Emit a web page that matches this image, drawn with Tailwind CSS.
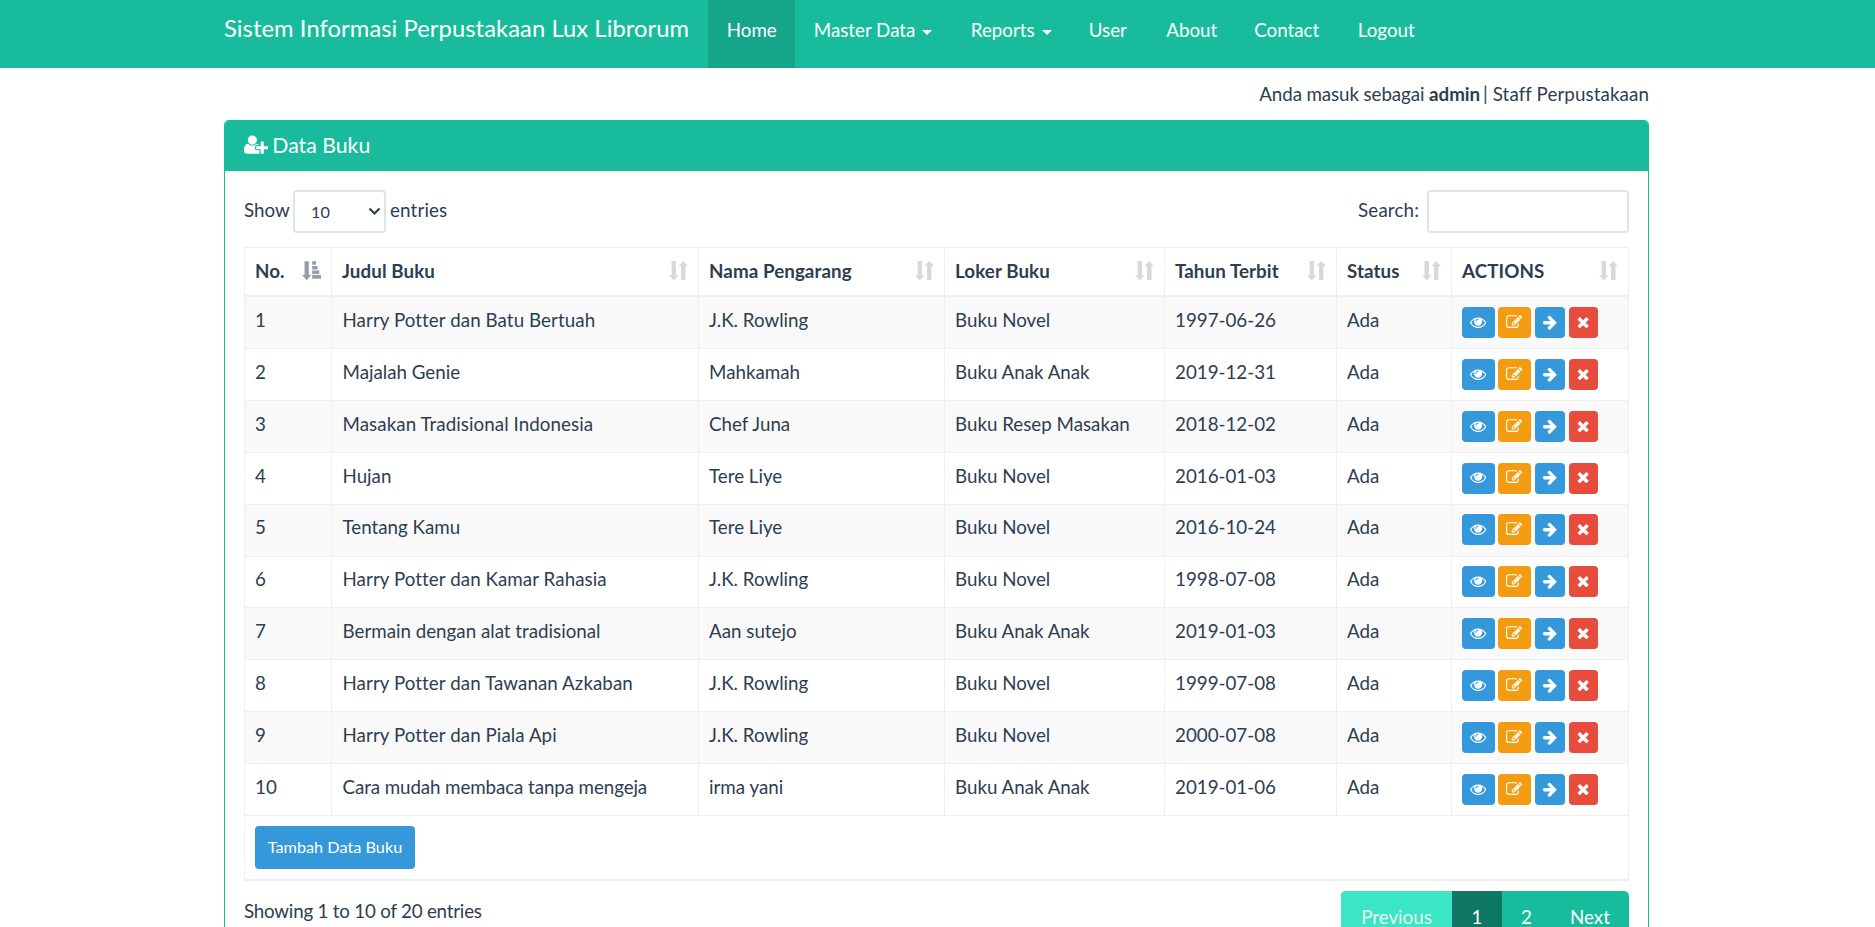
<!DOCTYPE html>
<html lang="id">
<head>
<meta charset="utf-8">
<title>Sistem Informasi Perpustakaan Lux Librorum</title>
<script src="https://cdn.jsdelivr.net/npm/@tailwindcss/browser@4"></script>
</head>
<body class="bg-white font-[Lato,sans-serif] text-[18.75px] leading-[26.8px] text-[#2c3e50] h-[927px] overflow-hidden">
<svg class="hidden">
  <symbol id="eye" viewBox="0 0 1792 1792"><path d="M1664 960q-152-236-381-353 61 104 61 225 0 185-131.5 316.5t-316.5 131.5-316.5-131.5-131.5-316.5q0-121 61-225-229 117-381 353 133 205 333.5 326.5t434.5 121.5 434.5-121.5 333.5-326.5zm-720-384q0-20-14-34t-34-14q-125 0-214.5 89.5t-89.5 214.5q0 20 14 34t34 14 34-14 14-34q0-86 61-147t147-61q20 0 34-14t14-34zm848 384q0 34-20 69-140 230-376.5 368.5t-499.5 138.5-499.5-139-376.5-368q-20-35-20-69t20-69q140-229 376.5-368t499.5-139 499.5 139 376.5 368q20 35 20 69z"/></symbol>
  <symbol id="edit" viewBox="0 0 1792 1792"><path d="M888 1184l116-116-152-152-116 116v56h96v96h56zm440-720q-16-16-33 1l-350 350q-17 17-1 33t33-1l350-350q17-17 1-33zm80 594v190q0 119-84.5 203.5t-203.5 84.5h-832q-119 0-203.5-84.5t-84.5-203.5v-832q0-119 84.5-203.5t203.5-84.5h832q63 0 117 25 15 7 18 23 3 17-9 29l-49 49q-14 14-32 8-23-6-45-6h-832q-66 0-113 47t-47 113v832q0 66 47 113t113 47h832q66 0 113-47t47-113v-126q0-13 9-22l64-64q15-15 35-7t20 29zm-96-738l288 288-672 672h-288v-288zm444 132l-92 92-288-288 92-92q28-28 68-28t68 28l152 152q28 28 28 68t-28 68z"/></symbol>
  <symbol id="arrow" viewBox="0 0 1792 1792"><path d="M1600 960q0 54-37 91l-651 651q-39 37-91 37-51 0-90-37l-75-75q-38-38-38-91t38-91l293-293h-704q-52 0-84.5-37.5t-32.5-90.5v-128q0-53 32.5-90.5t84.5-37.5h704l-293-294q-38-36-38-90t38-90l75-75q38-38 90-38 53 0 91 38l651 651q37 35 37 90z"/></symbol>
  <symbol id="times" viewBox="0 0 1792 1792"><path d="M1490 1322q0 40-28 68l-136 136q-28 28-68 28t-68-28l-294-294-294 294q-28 28-68 28t-68-28l-136-136q-28-28-28-68t28-68l294-294-294-294q-28-28-28-68t28-68l136-136q28-28 68-28t68 28l294 294 294-294q28-28 68-28t68 28l136 136q28 28 28 68t-28 68l-294 294 294 294q28 28 28 68z"/></symbol>
  <symbol id="sort" viewBox="0 0 19 19.5"><path d="M2.6 0h4.3v14.2h2.6L4.8 19.5 0 14.2h2.6zM14.2 0L19 5.3h-2.6v14.2h-4.3V5.3H9.5z"/></symbol>
  <symbol id="sorted" viewBox="0 0 19.5 19.5"><path d="M2.6 0h4.4v14.2h2.6L4.8 19.5 0 14.2h2.6zM10.4 0h4v3.7h-4zM10.4 4.8h5.6v3.7h-5.6zM10.4 9.4h7.3v3.7h-7.3zM10.4 14.2h9.1v3.8h-9.1z"/></symbol>
</svg>

<nav class="h-[68px] bg-[#18bc9c] text-white">
  <div class="ml-[224px] flex h-full whitespace-nowrap">
    <a class="w-[484px] pt-[15px] text-[23.75px] tracking-[0.07px]">Sistem Informasi Perpustakaan Lux Librorum</a>
    <a class="w-[87px] bg-[#15a589] pt-[17px] pl-[18.75px]">Home</a>
    <a class="w-[157px] pt-[17px] pl-[18.75px] flex">Master Data<i class="ml-[7px] mt-[13px] size-0 border-x-[5px] border-t-[5px] border-x-transparent border-t-white"></i></a>
    <a class="w-[118px] pt-[17px] pl-[18.75px] flex">Reports<i class="ml-[7px] mt-[13px] size-0 border-x-[5px] border-t-[5px] border-x-transparent border-t-white"></i></a>
    <a class="w-[77.5px] pt-[17px] pl-[18.75px]">User</a>
    <a class="w-[88px] pt-[17px] pl-[18.75px]">About</a>
    <a class="w-[103.5px] pt-[17px] pl-[18.75px]">Contact</a>
    <a class="pt-[17px] pl-[18.75px]">Logout</a>
  </div>
</nav>

<main class="ml-[224px] w-[1425px]">
  <p class="h-[52px] pt-[13px] text-right"><span class="tracking-[-0.1px]">Anda masuk sebagai </span><b class="-mr-[2px]">admin</b> <span class="tracking-[0.1px]">| Staff Perpustakaan</span></p>
  <section class="h-[807px] overflow-hidden rounded-t-[5px] border border-b-0 border-[#18bc9c] bg-white">
    <h3 class="flex h-[50px] items-start bg-[#18bc9c] pl-[19px] pt-[12px] text-[21.25px] leading-[25px] text-white">
      <svg class="mt-[1px] mr-[4px] h-[21.25px] w-[24.3px] fill-white" viewBox="0 0 2048 1792"><path d="M704 896q-159 0-271.5-112.5t-112.5-271.5 112.5-271.5 271.5-112.5 271.5 112.5 112.5 271.5-112.5 271.5-271.5 112.5zm960 128h352q13 0 22.5 9.5t9.5 22.5v192q0 13-9.5 22.5t-22.5 9.5h-352v352q0 13-9.5 22.5t-22.5 9.5h-192q-13 0-22.5-9.5t-9.5-22.5v-352h-352q-13 0-22.5-9.5t-9.5-22.5v-192q0-13 9.5-22.5t22.5-9.5h352v-352q0-13 9.5-22.5t22.5-9.5h192q13 0 22.5 9.5t9.5 22.5v352zm-736 224q0 52 38 90t90 38h256v238q-68 50-171 50h-874q-121 0-194-69t-73-190q0-53 3.5-103.5t14-109 26.5-108.5 43-97.5 62-81 85.5-53.5 111.5-20q19 0 39 17 79 61 154.5 91.5t164.5 30.5 164.5-30.5 154.5-91.5q20-17 39-17 132 0 217 96h-223q-52 0-90 38t-38 90v192z"/></svg>
      Data Buku
    </h3>
    <div class="px-[19px] pt-[19px]">
      <div class="flex h-[57px] justify-between">
        <label class="flex">
          <span class="w-[49px] pt-[7px]">Show</span>
          <span class="relative h-[43px] w-[93px]">
            <select class="h-full w-full appearance-none rounded-[4px] border-2 border-[#dce4ec] bg-white pl-[16px] pt-[2px] text-[16.25px]"><option>10</option></select>
            <svg class="absolute right-[5px] top-[17px] h-[9px] w-[13px] fill-none stroke-[#2c3e50] stroke-[2.2]" viewBox="0 0 13 9"><path d="M1.5 1.5l5 5 5-5"/></svg>
          </span>
          <span class="pl-[4px] pt-[7px] tracking-[0.15px]">entries</span>
        </label>
        <label class="flex">
          <span class="pr-[8px] pt-[7px] tracking-[0.15px]">Search:</span>
          <input class="h-[43px] w-[202px] rounded-[4px] border-2 border-[#dce4ec]">
        </label>
      </div>
      <table class="w-[1385px] table-fixed border-separate border-spacing-0 border-r border-[#ecf0f1]">
        <colgroup><col class="w-[87px]"><col class="w-[367px]"><col class="w-[246px]"><col class="w-[220px]"><col class="w-[172px]"><col class="w-[115px]"><col class="w-[177px]"></colgroup>
        <thead><tr id="head"></tr></thead>
        <tbody id="rows"></tbody>
        <tfoot><tr><td colspan="7" class="h-[66px] border-l border-t border-b-2 border-[#ecf0f1] px-[10px] pt-[10px] align-top"><button class="h-[43px] w-[160px] rounded-[4px] bg-[#3498db] text-[16.25px] text-white">Tambah Data Buku</button></td></tr></tfoot>
      </table>
      <div class="flex justify-between pt-[10px]">
        <p class="pt-[7px] tracking-[-0.21px]">Showing 1 to 10 of 20 entries</p>
        <div class="flex h-[53px] overflow-hidden rounded-[5px] bg-[#18bc9c] text-center text-white">
          <a class="w-[111px] bg-[#3be6c4] pt-[13px] text-[#ecf0f1]">Previous</a>
          <a class="w-[50px] bg-[#0f7864] pt-[13px]">1</a>
          <a class="w-[49px] pt-[13px]">2</a>
          <a class="w-[78px] pt-[13px]">Next</a>
        </div>
      </div>
    </div>
  </section>
</main>

<script>
const heads = ["No.", "Judul Buku", "Nama Pengarang", "Loker Buku", "Tahun Terbit", "Status", "ACTIONS"];
document.getElementById("head").innerHTML = heads.map((h, i) =>
  `<th class="relative h-[50px] border-l border-t border-b-2 border-[#ecf0f1] px-[10px] pt-[10px] text-left align-top font-bold tracking-[0.08px]">${h}<svg class="absolute bottom-[15px] right-[10px] h-[19.5px] w-[19px] ${i ? "fill-[#2c3e50]/20" : "fill-[#2c3e50]/50"}"><use href="#${i ? "sort" : "sorted"}"/></svg></th>`).join("");

const books = [
  ["Harry Potter dan Batu Bertuah", "J.K. Rowling", "Buku Novel", "1997-06-26"],
  ["Majalah Genie", "Mahkamah", "Buku Anak Anak", "2019-12-31"],
  ["Masakan Tradisional Indonesia", "Chef Juna", "Buku Resep Masakan", "2018-12-02"],
  ["Hujan", "Tere Liye", "Buku Novel", "2016-01-03"],
  ["Tentang Kamu", "Tere Liye", "Buku Novel", "2016-10-24"],
  ["Harry Potter dan Kamar Rahasia", "J.K. Rowling", "Buku Novel", "1998-07-08"],
  ["Bermain dengan alat tradisional", "Aan sutejo", "Buku Anak Anak", "2019-01-03"],
  ["Harry Potter dan Tawanan Azkaban", "J.K. Rowling", "Buku Novel", "1999-07-08"],
  ["Harry Potter dan Piala Api", "J.K. Rowling", "Buku Novel", "2000-07-08"],
  ["Cara mudah membaca tanpa mengeja", "irma yani", "Buku Anak Anak", "2019-01-06"]
];
const tracking = t => /^(Harry|Masakan)/.test(t) ? "tracking-[0.07px]" : /^Cara/.test(t) ? "tracking-[-0.09px]" : "";
const btn = (cls, icon) => `<button class="flex h-[31px] items-center justify-center rounded-[4px] ${cls}"><svg class="mb-px size-[16.25px] fill-white"><use href="#${icon}"/></svg></button>`;
const actions = `<div class="flex">${btn("w-[33px] bg-[#3498db]", "eye")}${btn("ml-[3px] w-[33px] bg-[#f39c12]", "edit")}${btn("ml-[4px] w-[30px] bg-[#3498db]", "arrow")}${btn("ml-[4px] w-[29px] bg-[#e74c3c]", "times")}</div>`;
document.getElementById("rows").innerHTML = books.map((b, i) =>
  `<tr class="${i % 2 ? "bg-white" : "bg-[#f9f9f9]"}">` + [i + 1, ...b, "Ada", actions].map((c, j) =>
    `<td class="border-l ${i ? "h-[51.875px] border-t pt-[9.8px]" : "h-[51px] pt-[10px]"} border-[#ecf0f1] ${j === 1 ? "pl-[10.5px]" : "pl-[10px]"} align-top ${j === 1 ? tracking(c) : ""}">${c}</td>`).join("") + `</tr>`).join("");
</script>
</body>
</html>
